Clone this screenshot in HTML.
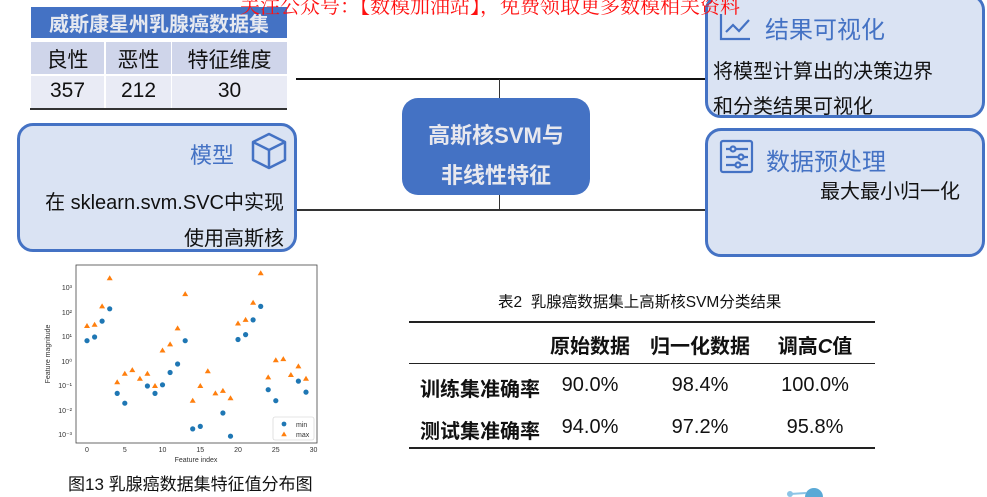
<!DOCTYPE html>
<html><head><meta charset="utf-8"><style>
*{margin:0;padding:0;box-sizing:border-box}
body{width:987px;height:497px;background:#fff;position:relative;overflow:hidden;font-family:"Liberation Sans","Noto Sans CJK SC",sans-serif;color:#111}
.a{position:absolute}
.box{position:absolute;background:#dae3f3;border:3px solid #4472c4;border-radius:16px}
.t{position:absolute;white-space:nowrap}
</style></head><body>
<div class="a" style="left:296px;top:78px;width:410px;height:2px;background:#111"></div>
<div class="a" style="left:296px;top:209px;width:410px;height:2px;background:#333"></div>
<div class="a" style="left:499px;top:79px;width:1px;height:20px;background:#333"></div>
<div class="a" style="left:499px;top:194px;width:1px;height:16px;background:#333"></div>

<div class="a" style="left:31px;top:7px;width:256px;height:31px;background:#4472c4"></div>
<div class="t" style="left:31px;top:8px;width:256px;text-align:center;color:#e6e9f0;font-weight:bold;font-size:20px">威斯康星州乳腺癌数据集</div>
<div class="a" style="left:31px;top:42px;width:73px;height:32px;background:#cfd5ea"></div>
<div class="a" style="left:106px;top:42px;width:65px;height:32px;background:#cfd5ea"></div>
<div class="a" style="left:172px;top:42px;width:115px;height:32px;background:#cfd5ea"></div>
<div class="a" style="left:31px;top:76px;width:73px;height:33px;background:#e9ebf5"></div>
<div class="a" style="left:106px;top:76px;width:65px;height:33px;background:#e9ebf5"></div>
<div class="a" style="left:172px;top:76px;width:115px;height:33px;background:#e9ebf5"></div>
<div class="a" style="left:30px;top:108px;width:257px;height:2px;background:#333"></div>
<div class="t" style="left:31px;top:44px;width:73px;text-align:center;font-size:21px">良性</div>
<div class="t" style="left:106px;top:44px;width:65px;text-align:center;font-size:21px">恶性</div>
<div class="t" style="left:172px;top:44px;width:115px;text-align:center;font-size:21px">特征维度</div>
<div class="t" style="left:31px;top:79px;width:73px;text-align:center;font-size:21px">357</div>
<div class="t" style="left:106px;top:79px;width:65px;text-align:center;font-size:21px">212</div>
<div class="t" style="left:172px;top:79px;width:115px;text-align:center;font-size:21px">30</div>

<div class="box" style="left:17px;top:123px;width:280px;height:129px"></div>
<div class="t" style="left:190px;top:138px;font-size:22px;color:#4472c4">模型</div>
<svg class="a" style="left:250px;top:131px" width="38" height="40" viewBox="0 0 38 40"><g fill="none" stroke="#4472c4" stroke-width="2.5" stroke-linejoin="round"><path d="M19 3 L35 11 L35 29 L19 37 L3 29 L3 11 Z"/><path d="M3 11 L19 19 L35 11 M19 19 L19 37"/></g></svg>
<div class="t" style="right:703px;top:186px;font-size:20px">在 sklearn.svm.SVC中实现</div>
<div class="t" style="right:703px;top:222px;font-size:20px">使用高斯核</div>

<div class="a" style="left:402px;top:98px;width:188px;height:97px;background:#4472c4;border-radius:16px"></div>
<div class="t" style="left:402px;top:118px;width:188px;text-align:center;color:#e8e8ee;font-weight:bold;font-size:22px">高斯核SVM与</div>
<div class="t" style="left:402px;top:158px;width:188px;text-align:center;color:#e8e8ee;font-weight:bold;font-size:22px">非线性特征</div>

<div class="box" style="left:705px;top:-6px;width:280px;height:124px"></div>
<svg class="a" style="left:719px;top:12px" width="34" height="30" viewBox="0 0 34 30"><g fill="none" stroke="#4472c4" stroke-width="2.2"><path d="M2 2 V27 H31"/><path d="M7 20 L14 13 L20 19 L30 8"/></g></svg>
<div class="t" style="left:765px;top:10px;font-size:24px;color:#4472c4">结果可视化</div>
<div class="t" style="left:713px;top:55px;font-size:20px">将模型计算出的决策边界</div>
<div class="t" style="left:713px;top:90px;font-size:20px">和分类结果可视化</div>

<div class="box" style="left:705px;top:128px;width:280px;height:129px"></div>
<svg class="a" style="left:719px;top:139px" width="36" height="35" viewBox="0 0 36 35"><g fill="none" stroke="#4472c4" stroke-width="2.2"><rect x="2" y="2" width="31" height="31" rx="2"/><path d="M7 10 H29 M7 18 H29 M7 26 H29"/><circle cx="14" cy="10" r="2.5" fill="#dae3f3"/><circle cx="22" cy="18" r="2.5" fill="#dae3f3"/><circle cx="19" cy="26" r="2.5" fill="#dae3f3"/></g></svg>
<div class="t" style="left:766px;top:142px;font-size:24px;color:#4472c4">数据预处理</div>
<div class="t" style="left:820px;top:175px;font-size:20px">最大最小归一化</div>

<div class="t" style="left:240px;top:-10px;font-family:'Liberation Serif','Noto Serif CJK SC',serif;font-size:20px;color:#ff1010">关注公众号：【数模加油站】，免费领取更多数模相关资料</div>

<svg class="a" style="left:0;top:0" width="987" height="497" viewBox="0 0 987 497">
<rect x="76" y="265" width="241" height="178" fill="none" stroke="#444" stroke-width="0.8"/>
<g font-family="Liberation Sans" font-size="7" fill="#333" text-anchor="middle">
<text x="87" y="452">0</text><text x="124.8" y="452">5</text><text x="162.5" y="452">10</text><text x="200.3" y="452">15</text><text x="238" y="452">20</text><text x="275.8" y="452">25</text><text x="313.5" y="452">30</text>
<text x="196" y="462">Feature index</text>
</g>
<g font-family="Liberation Sans" font-size="7" fill="#333" text-anchor="end">
<text x="72" y="290">10³</text><text x="72" y="315">10²</text><text x="72" y="339">10¹</text><text x="72" y="364">10⁰</text><text x="72" y="388">10⁻¹</text><text x="72" y="413">10⁻²</text><text x="72" y="437">10⁻³</text>
</g>
<text x="50" y="354" font-family="Liberation Sans" font-size="7" fill="#333" text-anchor="middle" transform="rotate(-90 50 354)">Feature magnitude</text>
<g fill="#1f77b4">
<circle cx="87" cy="340.7" r="2.6"/><circle cx="94.6" cy="337" r="2.6"/><circle cx="102.1" cy="321.1" r="2.6"/><circle cx="109.7" cy="308.8" r="2.6"/><circle cx="117.2" cy="393.4" r="2.6"/><circle cx="124.8" cy="403.2" r="2.6"/><circle cx="147.4" cy="386" r="2.6"/><circle cx="155" cy="393.4" r="2.6"/><circle cx="162.5" cy="384.8" r="2.6"/><circle cx="170.1" cy="372.5" r="2.6"/><circle cx="177.6" cy="364" r="2.6"/><circle cx="185.2" cy="340.7" r="2.6"/><circle cx="192.7" cy="428.9" r="2.6"/><circle cx="200.3" cy="426.4" r="2.6"/><circle cx="222.9" cy="413" r="2.6"/><circle cx="230.5" cy="436.2" r="2.6"/><circle cx="238" cy="339.5" r="2.6"/><circle cx="245.6" cy="334.6" r="2.6"/><circle cx="253.1" cy="319.9" r="2.6"/><circle cx="260.7" cy="306.4" r="2.6"/><circle cx="268.2" cy="389.7" r="2.6"/><circle cx="275.8" cy="400.7" r="2.6"/><circle cx="298.4" cy="381.1" r="2.6"/><circle cx="306" cy="392.1" r="2.6"/>
</g>
<g fill="#ff7f0e">
<path d="M87 323l3 5h-6z"/><path d="M94.6 321.8l3 5h-6z"/><path d="M102.1 303.4l3 5h-6z"/><path d="M109.7 275.2l3 5h-6z"/><path d="M117.2 379.3l3 5h-6z"/><path d="M124.8 370.8l3 5h-6z"/><path d="M132.3 367.1l3 5h-6z"/><path d="M139.9 375.7l3 5h-6z"/><path d="M147.4 370.8l3 5h-6z"/><path d="M155 383l3 5h-6z"/><path d="M162.5 347.5l3 5h-6z"/><path d="M170.1 341.4l3 5h-6z"/><path d="M177.6 325.4l3 5h-6z"/><path d="M185.2 291.1l3 5h-6z"/><path d="M192.7 397.7l3 5h-6z"/><path d="M200.3 383l3 5h-6z"/><path d="M207.8 368.3l3 5h-6z"/><path d="M215.4 390.4l3 5h-6z"/><path d="M222.9 387.9l3 5h-6z"/><path d="M230.5 395.3l3 5h-6z"/><path d="M238 320.5l3 5h-6z"/><path d="M245.6 316.9l3 5h-6z"/><path d="M253.1 299.7l3 5h-6z"/><path d="M260.7 270.3l3 5h-6z"/><path d="M268.2 374.4l3 5h-6z"/><path d="M275.8 357.3l3 5h-6z"/><path d="M283.3 356.1l3 5h-6z"/><path d="M290.9 372l3 5h-6z"/><path d="M298.4 363.4l3 5h-6z"/><path d="M306 375.7l3 5h-6z"/>
</g>
<rect x="273" y="417" width="41" height="23" fill="#fff" stroke="#ccc" stroke-width="0.6" rx="2"/>
<circle cx="284" cy="424" r="2.4" fill="#1f77b4"/><path d="M284 431.5l2.8 4.8h-5.6z" fill="#ff7f0e"/>
<text x="296" y="427" font-family="Liberation Sans" font-size="7" fill="#333">min</text>
<text x="296" y="437" font-family="Liberation Sans" font-size="7" fill="#333">max</text>
</svg>
<div class="t" style="left:68px;top:470px;font-size:17px">图13 乳腺癌数据集特征值分布图</div>

<div class="t" style="left:498px;top:290px;font-size:15.5px">表2&nbsp; 乳腺癌数据集上高斯核SVM分类结果</div>
<div class="a" style="left:409px;top:321px;width:466px;height:2px;background:#222"></div>
<div class="a" style="left:409px;top:363px;width:466px;height:1px;background:#222"></div>
<div class="a" style="left:409px;top:447px;width:466px;height:2px;background:#222"></div>
<div class="t" style="left:530px;top:330px;width:120px;text-align:center;font-size:20px;font-weight:bold">原始数据</div>
<div class="t" style="left:635px;top:330px;width:130px;text-align:center;font-size:20px;font-weight:bold">归一化数据</div>
<div class="t" style="left:755px;top:330px;width:120px;text-align:center;font-size:20px;font-weight:bold">调高<i>C</i>值</div>
<div class="t" style="left:420px;top:373px;font-size:20px;font-weight:bold">训练集准确率</div>
<div class="t" style="left:420px;top:415px;font-size:20px;font-weight:bold">测试集准确率</div>
<div class="t" style="left:530px;top:374px;width:120px;text-align:center;font-size:20px">90.0%</div>
<div class="t" style="left:635px;top:374px;width:130px;text-align:center;font-size:20px">98.4%</div>
<div class="t" style="left:755px;top:374px;width:120px;text-align:center;font-size:20px">100.0%</div>
<div class="t" style="left:530px;top:416px;width:120px;text-align:center;font-size:20px">94.0%</div>
<div class="t" style="left:635px;top:416px;width:130px;text-align:center;font-size:20px">97.2%</div>
<div class="t" style="left:755px;top:416px;width:120px;text-align:center;font-size:20px">95.8%</div>
<svg class="a" style="left:778px;top:485px" width="50" height="12"><circle cx="36" cy="12" r="9" fill="#5aa9d6"/><circle cx="12" cy="9" r="3" fill="#8cc4e6"/><path d="M12 9 L28 8" stroke="#8cc4e6" stroke-width="2"/></svg>
</body></html>
